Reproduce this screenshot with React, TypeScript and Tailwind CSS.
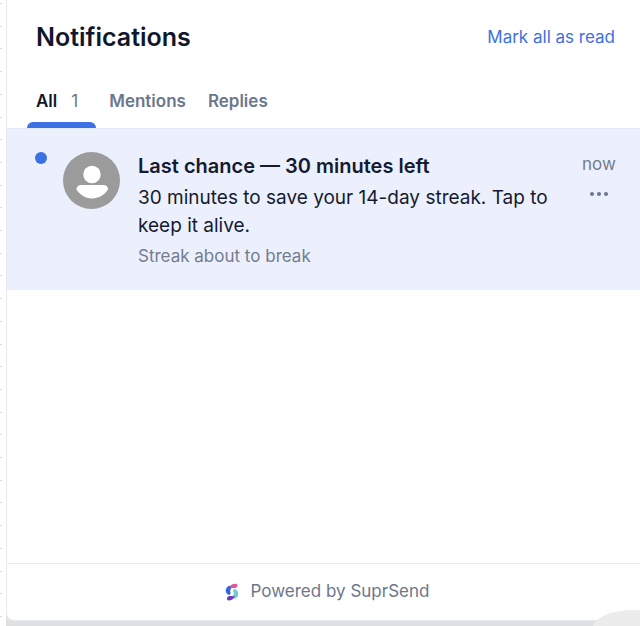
import { useState } from "react";
import clsx from "clsx";

type Notification = {
    id: number;
    title: string;
    body: string;
    category: string;
    time: string;
};

const tabs = ["All", "Mentions", "Replies"];

const notifications: Notification[] = [
    {
        id: 1,
        title: "Last chance — 30 minutes left",
        body: "30 minutes to save your 14-day streak. Tap to keep it alive.",
        category: "Streak about to break",
        time: "now",
    },
];

const Avatar = () => (
    <svg viewBox="0 0 57 57" className="size-[57px] shrink-0" role="img" aria-label="User">
        <circle cx="28.5" cy="28.5" r="28.5" fill="#9b9b9b" />
        <circle cx="29" cy="22.5" r="8.7" fill="#fff" />
        <path
            d="M18 33h22.500c2.800 0 4.500 1.900 4.500 4.300C43 41.500 36.500 46.500 29.200 46.500S15.500 41.700 13.500 37.300C13.500 34.900 15.300 33 18 33z"
            fill="#fff"
        />
    </svg>
);

const SuprSendLogo = () => (
    <svg viewBox="0 0 14 18" className="h-[18px] w-[14px]" aria-hidden="true">
        <path d="M4.300 4.500C5.300 2 7.500.6 10.300.7c1.900 0 2.700 1.300 1.900 2.700-.7 1.300-2 1.800-3.600 1.700C7 5 5.800 5.300 4.700 6.200z" fill="#e3559b" />
        <path d="M5.200 2.600C2.400 3.300.6 5.300.7 7.800c.1 2.300 1.600 3.700 3.900 4.200l1.200-1.700c-.8-1.500-.8-3 .2-4.800z" fill="#3565d8" />
        <path d="M8.800 6c2.900.5 4.500 2.300 4.500 4.800 0 2.700-1.700 4.600-4.600 5.100l-.9-2.600c1.200-1.700 1.400-3.200.3-4.900z" fill="#71cbd0" />
        <path d="M9.600 12.600c-.4 2.900-2.500 4.700-5.300 4.900-1.900.1-2.800-1.200-2.200-2.700.6-1.400 1.900-1.900 3.500-1.700 1.500.2 2.800.2 4-.5z" fill="#7136c7" />
    </svg>
);

const NotificationItem = ({ item, unread }: { item: Notification; unread: boolean }) => (
    <li className={clsx("flex items-start pt-[23px] pr-[25px] pb-[22px] pl-7", unread && "bg-[#ecf0fc]")}>
        <span className={clsx("size-3 shrink-0 rounded-full", unread && "bg-[#3d70e2]")} />
        <div className="ml-4">
            <Avatar />
        </div>
        <div className="ml-[18px] min-w-0 flex-1 leading-7 text-[#151a30]">
            <h2 className="text-[20px] font-semibold">{item.title}</h2>
            <p className="mt-1 text-[19px]">{item.body}</p>
            <p className="mt-1 text-[17px] leading-6 text-[#727c8f]">{item.category}</p>
        </div>
        <div className="flex w-8 flex-col items-center">
            <span className="text-[17px] leading-6 text-[#727c8f]">{item.time}</span>
            <button type="button" aria-label="More options" className="mt-2 h-5 text-[#6b778c]">
                <svg viewBox="0 0 18 4" className="h-1 w-[18px]" fill="currentColor">
                    <circle cx="2" cy="2" r="2" />
                    <circle cx="9" cy="2" r="2" />
                    <circle cx="16" cy="2" r="2" />
                </svg>
            </button>
        </div>
    </li>
);

const App = () => {
    const [activeTab, setActiveTab] = useState("All");
    const [unread, setUnread] = useState(true);

    return (
        <div className="relative flex min-h-screen overflow-hidden bg-white font-['Inter',sans-serif]">
            {/* Dotted page edge beside the panel */}
            <div className="flex w-[6px] flex-col justify-between pt-[3px] pb-[9px]" aria-hidden="true">
                {Array.from({ length: 28 }, (_, i) => (
                    <span key={i} className="h-px w-0.5 bg-[#d9dbea]" />
                ))}
            </div>

            <div className="flex flex-1 bg-linear-to-b from-white from-90% to-[#dedfe0] pb-[5px]">
                <main className="flex flex-1 flex-col rounded-bl-lg border-b border-l border-[#e6e9f2] bg-white">
                    <header className="flex items-center justify-between pt-[19px] pr-[25px] pl-[29px]">
                        <h1 className="text-[25px] leading-9 font-semibold text-[#10172a]">Notifications</h1>
                        <button type="button" className="text-[17px] leading-6 text-[#3d70e2]" onClick={() => setUnread(false)}>
                            Mark all as read
                        </button>
                    </header>

                    <nav className="mt-[26px] flex gap-1 border-b border-[#e4e9f5] pl-5">
                        {tabs.map((tab) => (
                            <button
                                key={tab}
                                type="button"
                                onClick={() => setActiveTab(tab)}
                                className={clsx(
                                    "flex h-[47px] flex-col justify-between px-[9px] pt-2 text-[17px] leading-6 font-semibold",
                                    activeTab === tab ? "text-[#10172a]" : "text-[#6b778c]"
                                )}
                            >
                                <span className="flex gap-[14px]">
                                    {tab}
                                    {tab === "All" && <span className="pr-[9px] font-normal text-[#6b778c]">1</span>}
                                </span>
                                {activeTab === tab && <span className="-mx-[9px] h-[6px] self-stretch rounded-t-md bg-[#3d70e2]" />}
                            </button>
                        ))}
                    </nav>

                    <ul className="flex-1">
                        {notifications.map((item) => (
                            <NotificationItem key={item.id} item={item} unread={unread} />
                        ))}
                    </ul>

                    <footer className="flex h-[57px] items-center justify-center gap-3 border-t border-[#e9ebf3] pl-[7px] text-[17px] text-[#6b778c]">
                        <SuprSendLogo />
                        Powered by SuprSend
                    </footer>
                </main>
            </div>

            {/* Floating control peeking in from below */}
            <div className="absolute -right-8 -bottom-6 h-10 w-20 rounded-[50%] bg-[#ececec]" aria-hidden="true" />
        </div>
    );
};

export default App;
